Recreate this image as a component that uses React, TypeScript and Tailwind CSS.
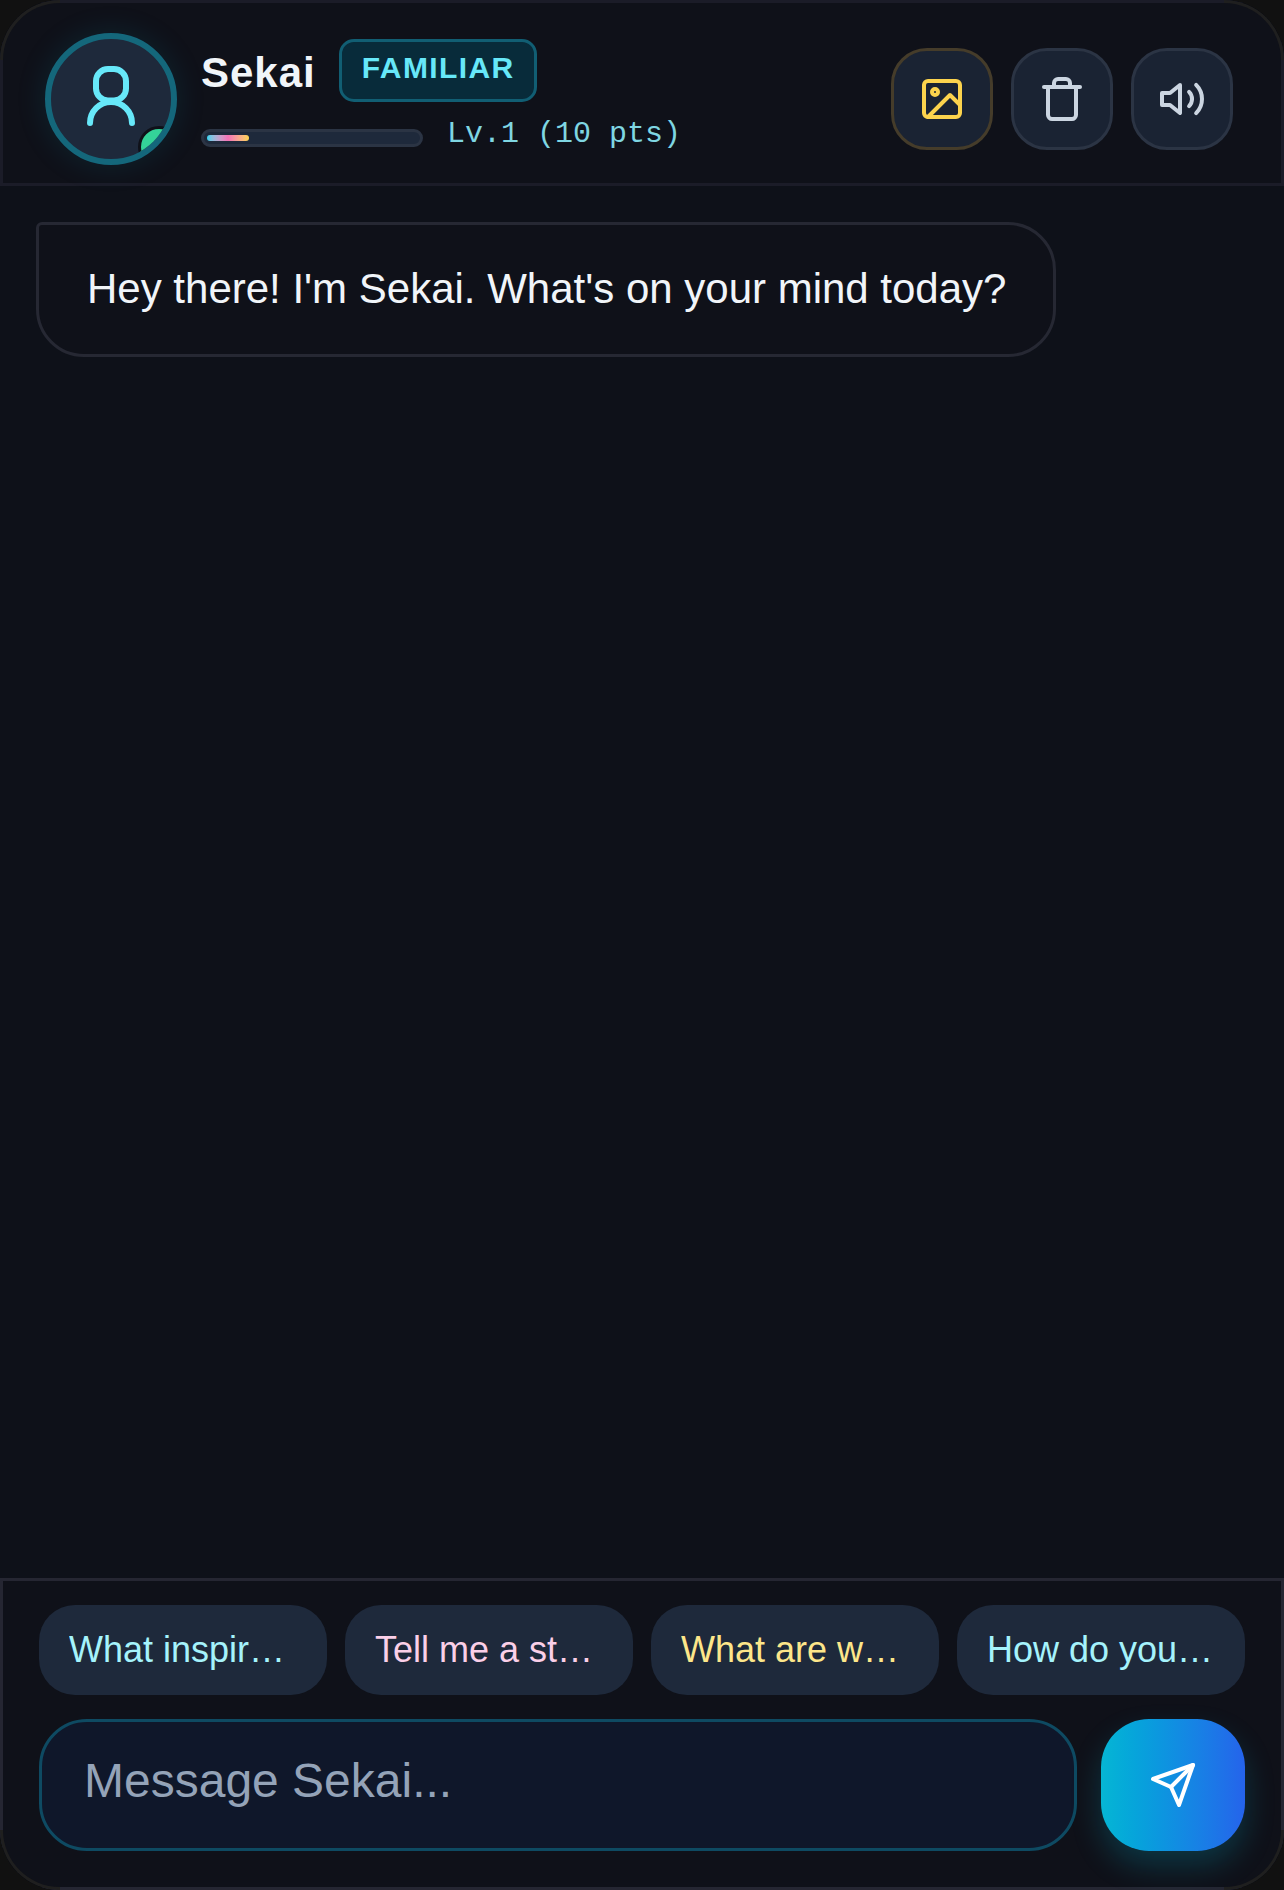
function Chip({ text, color }: { text: string; color: string }) {
  return (
    <button className={`flex h-[90px] min-w-0 flex-1 items-center rounded-[36px] bg-[#1e293b] px-[30px] text-[36px] ${color}`}>
      <span className="block truncate">{text}</span>
    </button>
  );
}

function IconButton({ children, border }: { children: React.ReactNode; border: string }) {
  return (
    <button className={`flex h-[102px] w-[102px] items-center justify-center rounded-[36px] border-[3px] bg-[#1a2333] ${border}`}>
      {children}
    </button>
  );
}

export default function App() {
  return (
    <div className="h-[1890px] w-[1284px] bg-[#111111] font-['Liberation_Sans',sans-serif]">
      <div className="relative flex h-full w-full flex-col overflow-hidden rounded-[60px] bg-[#0e1119]">
        <header className="flex h-[186px] items-start border-[3px] border-[#1b1c28] bg-[#0f1119] pl-[42px] pr-[48px] pt-[30px]">
          <div className="relative h-[132px] w-[132px] shrink-0 overflow-hidden rounded-full border-[6px] border-[#14677b] bg-[#1e293b] shadow-[0_0_30px_rgba(8,145,178,0.15)]">
            <svg className="absolute left-[24px] top-[21px]" width="72" height="72" viewBox="0 0 24 24" fill="none" stroke="#67e8f9" strokeWidth="2" strokeLinecap="round" strokeLinejoin="round">
              <path d="M19 21a7 7 0 0 0-14 0" />
              <rect x="7" y="3" width="10" height="10.5" rx="4" />
            </svg>
            <div className="absolute left-[87px] top-[87px] h-[42px] w-[42px] rounded-full border-[3px] border-[#0f1119] bg-[#34d399]" />
          </div>
          <div className="ml-[24px] flex flex-col">
            <div className="flex items-start">
              <span className="mt-[16px] text-[42px] font-bold leading-[48px] tracking-[1px] text-[#f1f5f9]">Sekai</span>
              <span className="ml-[23px] mt-[6px] flex h-[63px] items-center rounded-[15px] border-[3px] border-[#115e73] bg-[#082b3a] pb-[6px] pl-[20px] pr-[19px] text-[30px] font-bold tracking-[1.4px] text-[#67e8f9]">FAMILIAR</span>
            </div>
            <div className="mt-[14px] flex items-start">
              <div className="mt-[13px] h-[18px] w-[222px] rounded-full border-[3px] border-[#2b3444] bg-[#1e293b] p-[3px]">
                <div className="h-[6px] w-[42px] rounded-full bg-gradient-to-r from-[#22d3ee] via-[#f472b6] to-[#fcd34d]" />
              </div>
              <span className="ml-[24px] font-['Liberation_Mono',monospace] text-[30px] leading-[36px] text-[#7fd6e2]">Lv.1 (10 pts)</span>
            </div>
          </div>
          <div className="ml-auto mt-[15px] flex gap-[18px]">
            <IconButton border="border-[#453c2a]">
              <svg width="48" height="48" viewBox="0 0 24 24" fill="none" stroke="#fcd34d" strokeWidth="2" strokeLinecap="round" strokeLinejoin="round">
                <rect x="3" y="3" width="18" height="18" rx="2" />
                <circle cx="8.5" cy="8.5" r="1.5" />
                <path d="M21 15 16 10 5 21" />
              </svg>
            </IconButton>
            <IconButton border="border-[#2b3444]">
              <svg width="48" height="48" viewBox="0 0 24 24" fill="none" stroke="#cbd5e1" strokeWidth="2" strokeLinecap="round" strokeLinejoin="round">
                <path d="M3 6h18" />
                <path d="M19 6v14c0 1-1 2-2 2H7c-1 0-2-1-2-2V6" />
                <path d="M8 6V4c0-1 1-2 2-2h4c1 0 2 1 2 2v2" />
              </svg>
            </IconButton>
            <IconButton border="border-[#2b3444]">
              <svg width="48" height="48" viewBox="0 0 24 24" fill="none" stroke="#cbd5e1" strokeWidth="2" strokeLinecap="round" strokeLinejoin="round">
                <path d="M11 5 6 9H2v6h4l5 4Z" />
                <path d="M15.54 8.46a5 5 0 0 1 0 7.07" />
                <path d="M19.07 4.93a10 10 0 0 1 0 14.14" />
              </svg>
            </IconButton>
          </div>
        </header>
        <main className="flex-1 px-[36px] pt-[36px]">
          <div className="inline-block rounded-[48px] rounded-tl-[6px] border-[3px] border-[#262833] bg-[#0f1119] pb-[37px] pl-[48px] pr-[47px] pt-[35px] text-[42px] leading-[57px] text-[#f1f5f9]">
            Hey there! I'm Sekai. What's on your mind today?
          </div>
        </main>
        <footer className="h-[312px] border-[3px] border-[#252632] bg-[#0f1119] px-[36px] pt-[24px]">
          <div className="flex gap-[18px]">
            <Chip text="What inspires you most?" color="text-[#a5f3fc]" />
            <Chip text="Tell me a story about you" color="text-[#fbcfe8]" />
            <Chip text="What are we doing today?" color="text-[#fde68a]" />
            <Chip text="How do you feel today?" color="text-[#a5f3fc]" />
          </div>
          <div className="mt-[24px] flex gap-[24px]">
            <div className="flex h-[132px] flex-1 items-center rounded-[48px] border-[3px] border-[#0e4a62] bg-[#0f172a] px-[42px] pb-[8px] text-[48px] text-[#94a3b8]">
              Message Sekai...
            </div>
            <button className="flex h-[132px] w-[144px] items-center justify-center rounded-[48px] bg-gradient-to-r from-[#06b6d4] to-[#2563eb] shadow-[0_15px_30px_rgba(6,182,212,0.22)]">
              <svg width="48" height="48" viewBox="0 0 24 24" fill="none" stroke="#fff" strokeWidth="2" strokeLinecap="round" strokeLinejoin="round">
                <path d="M22 2 15 22l-4-9-9-4Z" />
                <path d="M22 2 11 13" />
              </svg>
            </button>
          </div>
        </footer>
        <div className="absolute left-0 top-0 h-[60px] w-[60px] rounded-tl-[60px] border-l-[3px] border-t-[3px] border-[#1f1f1f]" />
        <div className="absolute right-0 top-0 h-[60px] w-[60px] rounded-tr-[60px] border-r-[3px] border-t-[3px] border-[#1f1f1f]" />
        <div className="absolute bottom-0 left-0 h-[60px] w-[60px] rounded-bl-[60px] border-b-[3px] border-l-[3px] border-[#1f1f1f]" />
        <div className="absolute bottom-0 right-0 h-[60px] w-[60px] rounded-br-[60px] border-b-[3px] border-r-[3px] border-[#1f1f1f]" />
      </div>
    </div>
  );
}
